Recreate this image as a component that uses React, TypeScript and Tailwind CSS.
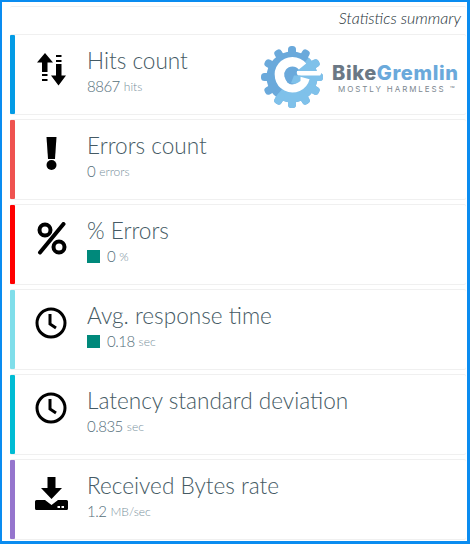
import type { ReactNode } from "react";

function HitsIcon() {
  return (
    <svg className="mt-[3px]" width="29" height="33" viewBox="0 0 29 33" fill="#000">
      <path d="M0 9.500 L8 0 L16 9.500 H10.500 V19 H5 V9.500 Z" />
      <rect x="5" y="21" width="5.500" height="2" />
      <rect x="5" y="26" width="5.500" height="2" />
      <rect x="19" y="2" width="5.500" height="2" />
      <rect x="19" y="7" width="5.500" height="2" />
      <path d="M19 11 H24.500 V22.500 H29 L21.500 32.500 L14 22.500 H19 Z" />
    </svg>
  );
}

function ExclaimIcon() {
  return (
    <svg width="11" height="33" viewBox="0 0 11 33" fill="#000">
      <path d="M0.500 0 H10.500 L9 22 H2 Z" />
      <circle cx="5.500" cy="28" r="5" />
    </svg>
  );
}

function PercentIcon() {
  return (
    <svg width="30" height="33" viewBox="0 0 30 33" fill="none" stroke="#000">
      <circle cx="8" cy="8" r="5.500" strokeWidth="4" />
      <circle cx="22" cy="25" r="5.500" strokeWidth="4" />
      <path d="M26.500 2 L3 30.500" strokeWidth="4" strokeLinecap="round" />
    </svg>
  );
}

function ClockIcon() {
  return (
    <svg className="mr-[1px]" width="32" height="32" viewBox="0 0 32 32" fill="none" stroke="#000">
      <circle cx="16" cy="16" r="14" strokeWidth="3" />
      <path d="M15 7 V17 L21 21" strokeWidth="3" />
    </svg>
  );
}

function DownloadIcon() {
  return (
    <svg width="33" height="33" viewBox="0 0 33 33" fill="#000">
      <path d="M12.500 0 H20.500 V11 H27 L16.500 22 L6 11 H12.500 Z" />
      <path d="M1.500 23 H10 L16.500 28 L23 23 H31.500 Q33 23 33 24.500 V31.500 Q33 33 31.500 33 H1.500 Q0 33 0 31.500 V24.500 Q0 23 1.500 23 Z" />
      <rect x="22.500" y="29" width="2.500" height="2" fill="#fff" />
      <rect x="26.500" y="29" width="2.500" height="2" fill="#fff" />
    </svg>
  );
}

function GearLogo() {
  const teeth = [0, 30, 60, 90, 120, 150, 180, 210, 240, 270, 300, 330];
  const body = (
    <>
      <circle cx="31" cy="31" r="25.500" />
      {teeth.map((a) => (
        <rect key={a} x="27" y="0" width="8" height="12" rx="3.500" transform={`rotate(${a} 31 31)`} />
      ))}
    </>
  );
  return (
    <svg width="62" height="62" viewBox="0 0 62 62">
      <defs>
        <clipPath id="lower">
          <path d="M54 4 L12 54 L14 62 H62 V0 Z" />
        </clipPath>
      </defs>
      <g fill="#6aa9db">{body}</g>
      <g fill="#7fc1ea" clipPath="url(#lower)">{body}</g>
      <path d="M41.500 20.500 A13 13 0 1 0 44 32" fill="none" stroke="#fff" strokeWidth="9.500" />
      <path d="M36 25 H59 Q61.500 27.200 59 29.500 H36 Z" fill="#fff" />
      <circle cx="31" cy="32" r="6.500" fill="#6aa9db" />
      <path d="M33 29.500 H39.500 V35 Q37 37 34 38 L30 37 Z" fill="#7fc1ea" />
    </svg>
  );
}

function Mark() {
  return <span className="mr-[7px] inline-block h-[13px] w-[13px] bg-[#00897b]" />;
}

type RowProps = {
  bar: string;
  icon: ReactNode;
  title: string;
  value: string;
  unit: string;
  mark?: boolean;
};

function Row({ bar, icon, title, value, unit, mark }: RowProps) {
  return (
    <div className="flex h-[79px] rounded-[2px] bg-white shadow-[0_-1px_0_#f0f0f0,0_1px_0_#f0f0f0]">
      <div className={`w-[5px] shrink-0 rounded-[1px] ${bar}`} />
      <div className="flex h-[66px] w-[72px] shrink-0 items-center justify-center pl-[1px]">{icon}</div>
      <div className="pt-[12px]">
        <div className="text-[22.600px] leading-[28px] font-light text-[#455a64]">{title}</div>
        <div className="mt-[2px] flex items-center font-light text-[#546e7a]">
          {mark && <Mark />}
          <span className="text-[15px] leading-[19px] tracking-[-0.5px]">{value}</span>
          <span className="ml-[4px] text-[12px] leading-[19px] text-[#78909c]">{unit}</span>
        </div>
      </div>
    </div>
  );
}

export default function App() {
  return (
    <div className="h-[544px] w-[470px] border-t-2 border-r-[3px] border-b-[3px] border-l-2 border-[#0a8cf0] bg-white font-['Lato',sans-serif]">
      <div className="relative ml-[8px] mt-[4px] flex w-[456px] flex-col gap-[6px]">
        <div className="flex h-[23px] items-center justify-end rounded-[2px] border-t border-[#f0f0f0] pr-[5px] text-[16px] font-light italic text-[#263238]">
          Statistics summary
        </div>
        <Row bar="bg-[#039be5]" icon={<HitsIcon />} title="Hits count" value="8867" unit="hits" />
        <Row bar="bg-[#ef5350]" icon={<ExclaimIcon />} title="Errors count" value="0" unit="errors" />
        <Row bar="bg-[#ff0000]" icon={<PercentIcon />} title="% Errors" value="0" unit="%" mark />
        <Row bar="bg-[#80deea]" icon={<ClockIcon />} title="Avg. response time" value="0.18" unit="sec" mark />
        <Row bar="bg-[#00bcd4]" icon={<ClockIcon />} title="Latency standard deviation" value="0.835" unit="sec" />
        <Row bar="bg-[#9575cd]" icon={<DownloadIcon />} title="Received Bytes rate" value="1.2" unit="MB/sec" />
        <div className="absolute left-[251px] top-[40px] flex items-start">
          <GearLogo />
          <div className="ml-[9px] pt-[17px]">
            <div className="font-['Inter',sans-serif] text-[20px] leading-[20px] font-extrabold tracking-[0.6px] text-[#6b7885]">
              Bike<span className="text-[#6aa9db]">Gremlin</span>
            </div>
            <div className="mt-[2px] ml-[6px] font-['Inter',sans-serif] text-[8px] leading-[9px] tracking-[1.900px] whitespace-nowrap text-[#7c8790]">
              MOSTLY HARMLESS ™
            </div>
          </div>
        </div>
      </div>
    </div>
  );
}
